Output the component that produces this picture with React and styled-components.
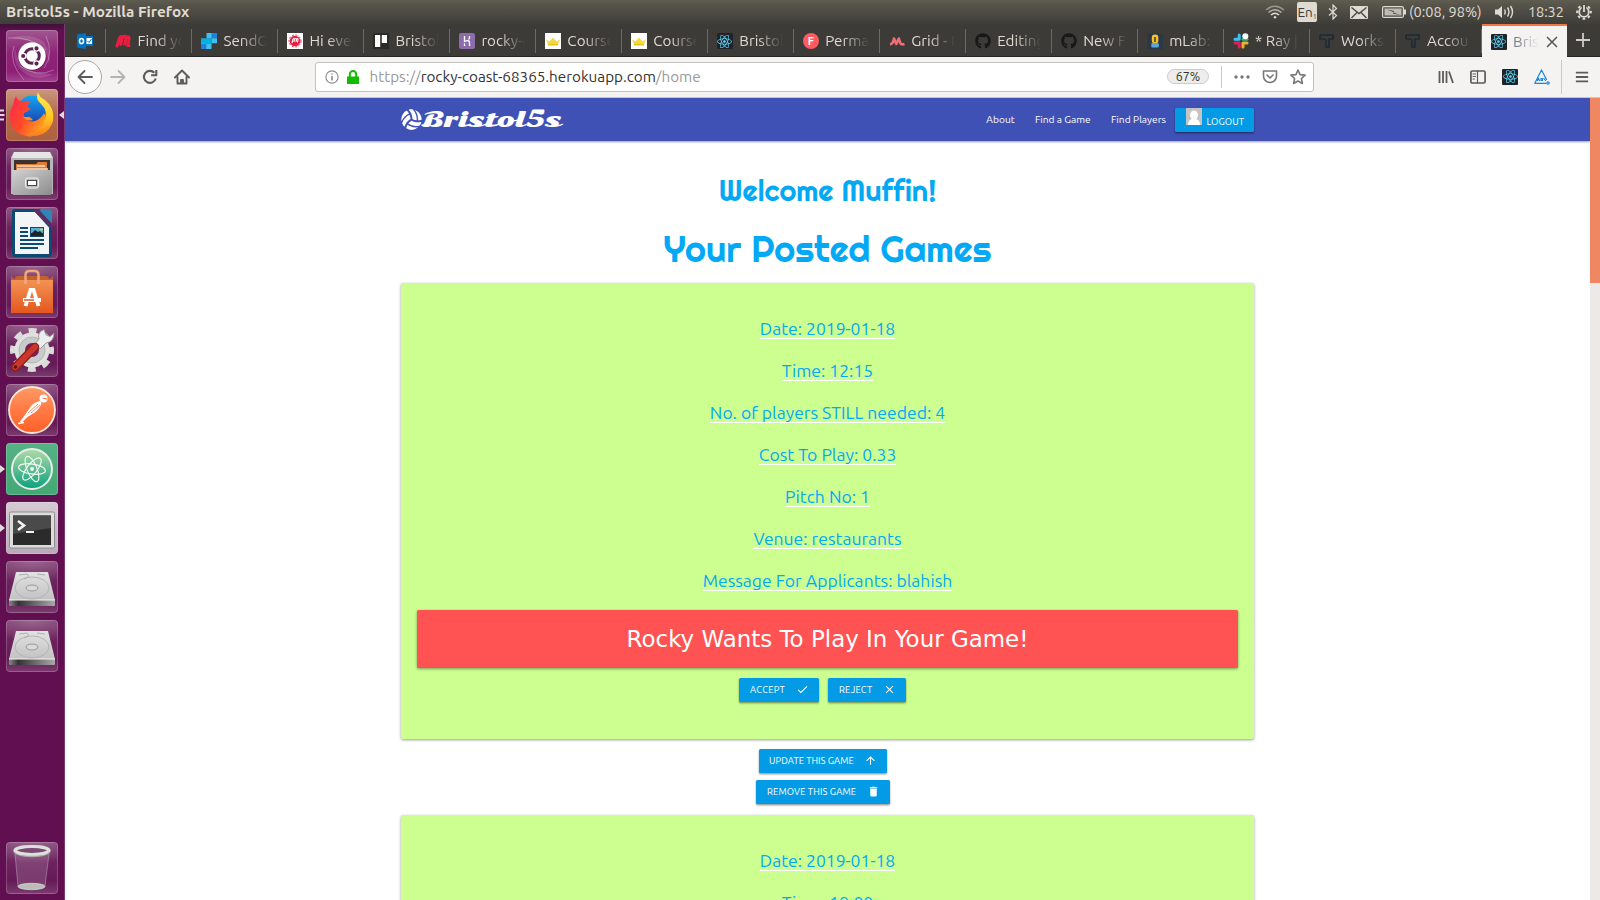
import React from "react";
import styled, { createGlobalStyle } from "styled-components";
import { FaGithub, FaReact, FaVolleyballBall } from "react-icons/fa";
import { MdCheck, MdClose, MdArrowUpward, MdDelete } from "react-icons/md";

const UI = `"Ubuntu", "Noto Sans", sans-serif`;

const GlobalStyle = createGlobalStyle`
  * { box-sizing: border-box; }
  body { margin: 0; overflow: hidden; background: #fff; font-family: ${UI}; }
  svg { display: block; flex: none; }
`;

const T = styled.span`
  letter-spacing: ${(p) => p.$ls || 0}px;
  white-space: pre;
`;

const Desktop = styled.div`
  width: 1600px;
  height: 900px;
  overflow: hidden;
  display: flex;
  flex-direction: column;
`;

/* ---------- system panel ---------- */
const Panel = styled.header`
  height: 24px;
  flex: none;
  display: flex;
  align-items: center;
  justify-content: space-between;
  padding: 0 8px 0 6px;
  background: linear-gradient(#5f5c50, #57544b 20%, #3e3d38);
  color: #e0dcd2;
  font-size: 14.5px;
`;
const PanelTitle = styled.div`
  font-size: 15.3px;
  font-weight: 700;
  line-height: 24px;
`;
const Indicators = styled.div`
  display: flex;
  align-items: center;
  line-height: 24px;
`;
const Ind = styled.div`
  display: flex;
  align-items: center;
  width: ${(p) => p.$w}px;
  height: 24px;
`;
const Lang = styled.div`
  width: 20px;
  height: 20px;
  border-radius: 2px;
  background: #dfdbd2;
  color: #3c3b37;
  font-size: 13.5px;
  line-height: 21px;
  display: flex;
  justify-content: center;
  align-items: baseline;
  small { font-size: 7px; line-height: 1; padding-top: 11px; align-self: flex-start; }
`;

const Below = styled.div`
  flex: 1;
  display: flex;
  min-height: 0;
`;

/* ---------- launcher ---------- */
const Launcher = styled.nav`
  width: 65px;
  flex: none;
  display: flex;
  flex-direction: column;
  gap: 7px;
  padding: 6px 0 6px 0;
  background: linear-gradient(#40103a, rgba(64, 16, 58, 0) 8px), #620f52;
  border-right: 1px solid #7d3a70;
`;
const Slot = styled.div`
  height: 52px;
  display: flex;
  align-items: center;
  margin-top: ${(p) => (p.$last ? "auto" : "0")};
`;
const Pip = styled.div`
  width: 6px;
  height: 14px;
  display: flex;
  align-items: center;
`;
const Tile = styled.div`
  width: 52px;
  height: 52px;
  border-radius: 4px;
  overflow: hidden;
  background: ${(p) => p.$bg || "radial-gradient(ellipse 50px 22px at 50% 0, rgba(255,255,255,0.22), rgba(255,255,255,0)), linear-gradient(#7d3d6f, #6b225d 40%, #651a57 75%, #7b3c6e)"};
  box-shadow: inset 0 0 0 1px rgba(255, 255, 255, 0.2);
`;

/* ---------- browser ---------- */
const Browser = styled.main`
  flex: 1;
  min-width: 0;
  display: flex;
  flex-direction: column;
`;
const Tabs = styled.div`
  height: 33px;
  flex: none;
  display: flex;
  background: #3c3b37;
  border-bottom: 1px solid #262522;
`;
const Tab = styled.div`
  width: ${(p) => (p.$pinned ? 41 : 85.98)}px;
  height: 32px;
  flex: none;
  display: flex;
  align-items: center;
  padding: 2px 0 0 ${(p) => (p.$pinned ? 12 : 9)}px;
  gap: 6.5px;
  font-size: 15.2px;
  color: #dfdbd2;
  background: linear-gradient(#6b6963, #6b6963) right 5px / 1px 24px no-repeat;
`;
const ActiveTab = styled(Tab)`
  width: 85px;
  height: 33px;
  background: #f4f3f1;
  border-top: 2px solid #f07746;
  padding-top: 0;
  color: #777b85;
`;
const TabLabel = styled.div`
  width: ${(p) => p.$w || 45}px;
  overflow: hidden;
  white-space: nowrap;
  line-height: 24px;
  mask-image: linear-gradient(90deg, #000 ${(p) => (p.$w ? 15 : 40)}%, transparent 98%);
`;
const Fav = styled.div`
  width: 16px;
  height: 16px;
  flex: none;
  display: flex;
  align-items: center;
  justify-content: center;
  border-radius: ${(p) => p.$r || 0}px;
  background: ${(p) => p.$bg || "transparent"};
  color: ${(p) => p.$c || "#fff"};
  font-size: ${(p) => p.$fs || 16}px;
  font-weight: 700;
  line-height: 1;
`;
const NewTab = styled.div`
  flex: 1;
  display: flex;
  align-items: center;
  justify-content: center;
`;

const Toolbar = styled.div`
  height: 41px;
  flex: none;
  display: flex;
  align-items: center;
  background: #f4f3f1;
  border-bottom: 1px solid #c9c7c2;
  padding: 0 0 1px 3px;
`;
const BackBtn = styled.div`
  width: 34px;
  height: 34px;
  flex: none;
  border-radius: 50%;
  border: 1px solid #a9a8a5;
  background: #fcfcfc;
  display: flex;
  align-items: center;
  justify-content: center;
`;
const ToolBtn = styled.div`
  width: ${(p) => p.$w || 32}px;
  height: 32px;
  flex: none;
  display: flex;
  align-items: center;
  justify-content: center;
`;
const UrlBar = styled.div`
  width: 999px;
  height: 30px;
  flex: none;
  margin-left: 117px;
  margin-right: 116px;
  display: flex;
  align-items: center;
  background: #fff;
  border: 1px solid #c3c2be;
  border-radius: 3px;
  padding-left: 9px;
  gap: 6px;
  font-size: 15.25px;
  color: #9a9a9a;
  b { font-weight: 400; color: #333; }
`;
const UrlText = styled.div`
  margin-left: 2.5px;
  flex: 1;
  line-height: 24px;
`;
const UrlTools = styled.div`
  display: flex;
  align-items: center;
`;
const Zoom = styled.div`
  width: 42px;
  height: 15px;
  border-radius: 8px;
  background: #ededec;
  border: 1px solid #cdcccb;
  color: #333;
  font-size: 12.4px;
  line-height: 13px;
  text-align: center;
  margin-right: 12px;
`;
const VLine = styled.div`
  width: 1px;
  flex: none;
  height: ${(p) => p.$h}px;
  margin: 0 ${(p) => p.$mr || 0}px 0 ${(p) => p.$ml || 0}px;
  background: #c9c8c5;
`;

/* ---------- page ---------- */
const Viewport = styled.div`
  flex: 1;
  display: flex;
  min-height: 0;
`;
const Page = styled.div`
  width: 1525px;
  overflow: hidden;
`;
const Scroll = styled.div`
  width: 10px;
  background: #eceae8;
`;
const Thumb = styled.div`
  height: 185px;
  background: #f08763;
`;
const SiteNav = styled.div`
  height: 43px;
  background: #3f51b5;
  box-shadow: 0 1px 2px rgba(0, 0, 0, 0.4);
  padding: 0 336px 0 336px;
  display: flex;
  align-items: center;
  color: #fff;
`;
const Brand = styled.div`
  display: flex;
  align-items: center;
  flex: 1;
`;
const BrandName = styled.div`
  font: 400 21.4px/24px "Sonsie One", "DejaVu Serif", serif;
`;
const NavLink = styled.div`
  font-size: 10.15px;
  padding-right: ${(p) => p.$pr}px;
`;
const Btn = styled.div`
  height: 24px;
  display: flex;
  align-items: center;
  background: #039be5;
  color: #fff;
  border-radius: 1.5px;
  box-shadow: 0 1px 2px rgba(0, 0, 0, 0.35), 0 2px 2px rgba(0, 0, 0, 0.12);
  font-size: 9.4px;
  width: ${(p) => p.$w}px;
  padding: 0 ${(p) => p.$pr || 10}px 2px ${(p) => p.$pl || 11}px;
  justify-content: space-between;
`;
const Logout = styled(Btn)`
  align-items: flex-start;
  line-height: 27px;
`;
const Body = styled.div`
  display: flex;
  flex-direction: column;
  align-items: center;
`;
const Welcome = styled.h3`
  margin: 29px 0 0;
  font: 400 29px/40px "Righteous", "Lato", sans-serif;
  color: #03a9f4;
`;
const Heading = styled.h2`
  margin: 14px 0 0;
  font: 400 36px/50px "Righteous", "Lato", sans-serif;
  color: #03a9f4;
`;
const Card = styled.section`
  width: 853px;
  height: 456px;
  margin-top: ${(p) => p.$mt}px;
  background: #ccff90;
  border-radius: 2px;
  box-shadow: 0 1px 3px rgba(0, 0, 0, 0.4);
  padding: 25px 16px 0;
  display: flex;
  flex-direction: column;
  align-items: center;
  flex: none;
`;
const Row = styled.div`
  height: 42px;
  display: flex;
  align-items: center;
  color: #03a9f4;
  font-size: 17.55px;
`;
const Under = styled.span`
  line-height: 20px;
  height: 20px;
  border-bottom: 1px solid #fff;
`;
const Alert = styled.div`
  width: 821px;
  height: 58px;
  margin-top: 8px;
  background: #ff5252;
  border-radius: 1.5px;
  box-shadow: 0 1px 3px rgba(0, 0, 0, 0.4);
  color: #fff;
  font: 22.95px/58px "DejaVu Sans", sans-serif;
  text-align: center;
`;
const Pair = styled.div`
  display: flex;
  gap: 9px;
  margin: 10px 10px 0 0;
`;
const Actions = styled.div`
  display: flex;
  flex-direction: column;
  align-items: center;
  gap: 7px;
  margin: 10px 9px 0 0;
`;

/* ---------- drawings ---------- */
const ReactFav = () => (
  <Fav $bg="#20232a" $r={1} $c="#61dafb" $fs={15}><FaReact /></Fav>
);
const Crown = () => (
  <Fav $bg="#fff">
    <svg width="16" height="16" viewBox="0 0 16 16"><path d="M1 6.500l3.500 2L8 4.500l3.500 4 3.500-2-2 5H3z" fill="#f5d83d" /><path d="M3 11h10v1.500H3z" fill="#e3c21f" /></svg>
  </Fav>
);
const Tee = () => (
  <Fav>
    <svg width="16" height="16" viewBox="0 0 16 16" fill="none" stroke="#1c2b36" strokeWidth="1.600">
      <path d="M1 2h13v4H10v8H7V6M1 2v4h5" />
    </svg>
  </Fav>
);

const tabs = [
  ["Find yo", <Fav><svg width="16" height="14" viewBox="0 0 16 14" fill="none" stroke="#ed1c40" strokeWidth="3" strokeLinecap="round" strokeLinejoin="round"><path d="M2 12L4.500 4Q6 1.500 7.500 3L5.800 10.500M7.500 4Q9.500 1 11.300 3L9.700 10M11.300 4Q13.800 1.500 14.200 4L12.700 11.500h1.300" /></svg></Fav>],
  ["SendG", <Fav><svg width="16" height="16" viewBox="0 0 16 16"><path fill="#9dd6f5" d="M0 5.300h5.300V16H0z" /><path fill="#00b3e3" d="M0 5.300h5.300v5.300H0zM5.300 5.300h5.400v5.300H5.300z" /><path fill="#1a82e2" d="M10.700 0H16v5.300h-5.300zM0 10.600h5.300V16H0z" /><path fill="#3fc0ef" d="M10.700 5.300H16v5.300h-5.300zM5.300 0h5.400v5.300H5.300zM5.300 10.600h5.400V16H5.300z" /><path fill="#3c3b37" d="M0 0h5.300v5.300H0zM10.700 10.600H16V16h-5.300z" /></svg></Fav>],
  ["Hi ever", <Fav $bg="#fff"><svg width="14" height="14" viewBox="0 0 14 14"><circle cx="7" cy="7" r="5.300" fill="#ed1c40" /><circle cx="7" cy="7" r="6" fill="none" stroke="#ed1c40" strokeWidth=".9" strokeDasharray="2 1.500" /><path d="M4 9l1-4q1-1 1.500 0L6 8m.500-3Q8 4 8.500 5L8 8m.500-3Q10 4 10 5l-.5 3.500" fill="none" stroke="#fff" strokeWidth="1.100" /></svg></Fav>],
  ["Bristol", <Fav><svg width="16" height="16" viewBox="0 0 16 16"><rect width="16" height="16" rx="1" fill="#2a2a28" /><rect x="2" y="2" width="5.200" height="12" fill="#fff" /><rect x="8.800" y="2" width="5.200" height="8" fill="#fff" /></svg></Fav>],
  ["rocky-c", <Fav $bg="#8d6cab" $r={2}><svg width="16" height="16" viewBox="0 0 16 16" fill="none" stroke="#fff" strokeWidth="1.300"><path d="M5.500 3v5.500Q10.500 6.500 10.500 9.500V13M5.500 10.500v2.500M10.500 3v2l-1 1.500" /></svg></Fav>],
  ["Course", <Crown />],
  ["Course", <Crown />],
  ["Bristol", <ReactFav />],
  ["Perma", <Fav $bg="#ff5a5f" $r={8} $fs={11}>F</Fav>],
  ["Grid - N", <Fav><svg width="16" height="16" viewBox="0 0 16 16" fill="none" stroke="#ee6e73" strokeWidth="2.600" strokeLinejoin="round"><path d="M1 11.500Q4 11 5 5.500l2.300 5.500L9.800 5.500l1.700 5q1 1.500 4 .5" /></svg></Fav>],
  ["Editing", <Fav $c="#191717"><FaGithub /></Fav>],
  ["New Fi", <Fav $c="#191717"><FaGithub /></Fav>],
  ["mLab:", <Fav $bg="#2b3947"><svg width="16" height="16" viewBox="0 0 16 16"><rect x="4.800" y="1.500" width="6.500" height="9" rx="3" fill="#f7c325" /><rect x="4.300" y="10" width="7.500" height="4.500" rx="1" fill="#5aa7dc" /><path d="M8 4v5" stroke="#2b3947" strokeWidth="1.500" /></svg></Fav>],
  ["* Ray |", <Fav><svg width="16" height="16" viewBox="0 0 16 16" strokeWidth="3" strokeLinecap="round"><path d="M6.200 2v4M2 6.200h4" stroke="#36c5f0" /><path d="M10 6.200h4" stroke="#2eb67d" /><path d="M10 10v4M10 10h4" stroke="#ecb22e" /><path d="M2 10h4M6.200 10v4" stroke="#e01e5a" /><circle cx="12.300" cy="3.300" r="3" fill="#fff" /></svg></Fav>],
  ["Works", <Tee />],
  ["Accou", <Tee />],
];

const facts = (time) => [
  "Date: 2019-01-18",
  `Time: ${time}`,
  "No. of players STILL needed: 4",
  "Cost To Play: 0.33",
  "Pitch No: 1",
  "Venue: restaurants",
  "Message For Applicants: blahish",
];

const Drive = () => (
  <svg width="52" height="52" viewBox="0 0 52 52">
    <defs>
      <linearGradient id="dr" x1="0" y1="0" x2="0" y2="1"><stop offset="0" stopColor="#e2e2e2" /><stop offset="1" stopColor="#c2c2c2" /></linearGradient>
      <linearGradient id="drf"><stop offset="0" stopColor="#888" /><stop offset=".2" stopColor="#333" /><stop offset="1" stopColor="#aaa" /></linearGradient>
    </defs>
    <path d="M10 11h32l7 28H3z" fill="url(#dr)" />
    <path d="M3 39h46v5q0 1-1 1H4q-1 0-1-1z" fill="url(#drf)" />
    <path d="M3 39h46" stroke="#f4f4f4" />
    <ellipse cx="26" cy="27" rx="17" ry="11" fill="none" stroke="#b4b4b4" />
    <ellipse cx="26" cy="27" rx="6" ry="3" fill="#d9d9d9" stroke="#999" />
    <path d="M13 14l8-1q4 3-3 5M31 13l8 1" fill="none" stroke="#b0b0b0" />
  </svg>
);

const tiles = [
  { bg: "linear-gradient(#a0578f, #8e2377 45%, #8e1f77 80%, #a2458e)", art: (
    <svg width="52" height="52" viewBox="0 0 52 52" fill="none">
      <path d="M5 8Q24 2 38 12 46 22 43 34 40 14 24 11 14 9 5 8zM47 44Q32 52 18 43 6 34 9 18 12 36 26 41 38 44 47 44z" fill="#fff" opacity=".13" />
      <g stroke="#fff" strokeOpacity=".3">
        <path d="M2 8Q24 6 40 20M40 6Q48 24 38 38M48 40Q30 48 14 36M18 50Q2 32 8 16" />
      </g>
      <circle cx="26" cy="26.500" r="14" fill="#000" opacity=".25" />
      <circle cx="26" cy="26" r="13.700" fill="#fff" />
      <circle cx="26" cy="26" r="7.300" stroke="#5e2750" strokeWidth="3" />
      <g fill="#5e2750" stroke="#fff" strokeWidth="1.200"><circle cx="17.200" cy="26" r="2.700" /><circle cx="30.500" cy="18.400" r="2.700" /><circle cx="30.500" cy="33.600" r="2.700" /></g>
    </svg>) },
  { bg: "linear-gradient(#c99880, #b3694a 50%, #b0623f)", pip: "bars", art: (
    <svg width="52" height="52" viewBox="0 0 52 52">
      <defs>
        <linearGradient id="ff" x1="0" y1="0.200" x2="1" y2="0.800"><stop offset="0" stopColor="#ff2a4d" /><stop offset=".45" stopColor="#ff4a2a" /><stop offset="1" stopColor="#ffb01e" /></linearGradient>
        <linearGradient id="fy" x1="0" y1="0" x2="0" y2="1"><stop offset="0" stopColor="#fff04a" /><stop offset=".6" stopColor="#ffc524" /><stop offset="1" stopColor="#ff7a1a" /></linearGradient>
        <linearGradient id="fb" x1="0" y1="0" x2="0" y2="1"><stop offset="0" stopColor="#12a5f5" /><stop offset="1" stopColor="#1b3fae" /></linearGradient>
      </defs>
      <circle cx="26" cy="21" r="14.500" fill="url(#fb)" />
      <path d="M10 7q2 6 7 5 5-1 8 1-4 2-3 5l3 2q-3 1-4 3-4 0-3 4 3 7 11 5 6-2 9-8 5 8-2 17-6 7-13 6.500Q10 46 5 35 2 25 7 16q1-6 3-9z" fill="url(#ff)" />
      <path d="M32 3q-3 7 3 12 8 7 3 18-4 10-14 14 12 1 19-7 7-9 3-20-3-6-7-9-6-3-7-8z" fill="url(#fy)" />
      <path d="M17 28q4 5 10 3-3-4-6-3z" fill="#ff8a2a" />
    </svg>) },
  { art: (
    <svg width="52" height="52" viewBox="0 0 52 52">
      <defs><linearGradient id="fi" x1="0" y1="0" x2="1" y2="1"><stop offset="0" stopColor="#d2d2d2" /><stop offset="1" stopColor="#8c8c8c" /></linearGradient></defs>
      <path d="M8 4h36l3 5v37H5V9z" fill="#b7b7b7" /><path d="M8 4h36l2 6H6z" fill="#e6e6e6" />
      <rect x="8" y="12" width="36" height="12" fill="#3a3230" />
      <path d="M10 24v-8h20l2-2h9v10z" fill="#e07a37" /><path d="M11 18h28M11 21h31" stroke="#f8dcc0" strokeWidth="1.300" />
      <path d="M6 22h40v22q0 3-2 3H8q-2 0-2-3z" fill="url(#fi)" />
      <rect x="19.500" y="30" width="13" height="10" rx="2" fill="#bcbcbc" stroke="#eee" /><rect x="21.500" y="32.500" width="9" height="5" fill="#fff" stroke="#444" />
    </svg>) },
  { art: (
    <svg width="52" height="52" viewBox="0 0 52 52">
      <path d="M8 2h26l12 13v31q0 4-4 4H10q-4 0-4-4V4q0-2 2-2z" fill="#0b4a72" />
      <path d="M9 5h20l14 15.500V47H9z" fill="#f2f4f6" />
      <path d="M33 3h10q3 0 3 3v11z" fill="#2f86b5" /><path d="M27 3l19 19V17L33 3z" fill="#5c2d63" />
      <g stroke="#0b4a72" strokeWidth="2"><path d="M14 21h8M14 25h8M14 29h8M14 33h24M14 37h24M14 41h18" /></g>
      <rect x="24" y="20" width="14" height="10" fill="#0b4a72" /><rect x="25" y="21" width="12" height="5" fill="#57b0d9" /><path d="M25 29v-2l4-4 3 2 2-1 3 3v2z" fill="#222" /><circle cx="35.500" cy="22.500" r="1.300" fill="#f3c623" />
    </svg>) },
  { art: (
    <svg width="52" height="52" viewBox="0 0 52 52">
      <defs><linearGradient id="sw" x1="0" y1="0" x2="0" y2="1"><stop offset="0" stopColor="#f29355" /><stop offset="1" stopColor="#e4571d" /></linearGradient></defs>
      <path d="M5 10l3 3 3-3h30l3 3 3-3v6H5z" fill="#c4602d" />
      <path d="M5 14h42v33H5z" fill="url(#sw)" />
      <path d="M19.500 18V9q0-4 4-4h5q4 0 4 4v9" fill="none" stroke="#f0a77c" strokeWidth="2.500" />
      <path d="M19.500 40l5-16h3l5 16" fill="none" stroke="#fff" strokeWidth="3.800" /><path d="M17 34h18" stroke="#fff" strokeWidth="4" /><path d="M18 34h10" stroke="#d5622c" strokeWidth="1.300" />
    </svg>) },
  { art: (
    <svg width="52" height="52" viewBox="0 0 52 52">
      <circle cx="26" cy="25" r="19.500" fill="none" stroke="#d9dcd9" strokeWidth="5" strokeDasharray="8 7.315" strokeDashoffset="4" />
      <circle cx="26" cy="25" r="17.500" fill="#dfe0df" /><circle cx="26" cy="25" r="13" fill="#c9cbca" stroke="#b5b7b6" />
      <circle cx="26" cy="25" r="7" fill="#741f5f" />
      <path d="M33 14q-2-7 5-9.500l2 5.500 4 1.500 4-3.500q0 9-8 10l-6 6-5-5z" fill="#eceeed" stroke="#8b8b8b" strokeWidth=".8" />
      <path d="M9.500 42L29 22" stroke="#8f1d18" strokeWidth="8.500" strokeLinecap="round" /><path d="M9.500 42L29 22" stroke="#c9362e" strokeWidth="6" strokeLinecap="round" />
      <circle cx="9.500" cy="42" r="1.700" fill="#65100d" />
    </svg>) },
  { art: (
    <svg width="52" height="52" viewBox="0 0 52 52">
      <defs><linearGradient id="pm" x1="0" y1="0" x2="0" y2="1"><stop offset="0" stopColor="#ff9a63" /><stop offset=".5" stopColor="#ff7a45" /><stop offset="1" stopColor="#ff5f28" /></linearGradient></defs>
      <circle cx="26" cy="26" r="23" fill="url(#pm)" stroke="#f8e6dc" strokeWidth="1.800" />
      <circle cx="37.500" cy="14.500" r="4" fill="#fff" /><path d="M36.500 14l4.500 1" stroke="#ff6c37" />
      <path d="M34 17q-8 2-11 8l-4 6-5 6.500 1.500 1.500 6-6 8-5q4-3 6-9z" fill="#fff" />
      <path d="M32 20l-10 9M34 21l-9 8" stroke="#ff6c37" strokeWidth=".8" /><path d="M12 39.500l6-1" stroke="#fff" strokeWidth="1.500" />
    </svg>) },
  { bg: "linear-gradient(#55b284, #42a874)", pip: "arrow", art: (
    <svg width="52" height="52" viewBox="0 0 52 52" fill="none">
      <defs><linearGradient id="at" x1="0" y1="0" x2="0" y2="1"><stop offset="0" stopColor="#b0dba8" /><stop offset="1" stopColor="#0aa07c" /></linearGradient></defs>
      <circle cx="26" cy="26" r="20" fill="url(#at)" stroke="#e9ece9" strokeWidth="2" />
      <g stroke="#f3f8f3" strokeWidth="1.200"><ellipse cx="26" cy="26" rx="13.500" ry="5" transform="rotate(8 26 26)" /><ellipse cx="26" cy="26" rx="13.500" ry="5" transform="rotate(68 26 26)" /><ellipse cx="26" cy="26" rx="13.500" ry="5" transform="rotate(128 26 26)" /></g>
      <circle cx="26" cy="26" r="2" fill="#f3f8f3" />
    </svg>) },
  { bg: "linear-gradient(#d5cad3, #b9aab7)", pip: "arrow", art: (
    <svg width="52" height="52" viewBox="0 0 52 52">
      <rect x="3.500" y="10" width="45" height="36" rx="1.500" fill="#dcdcdc" stroke="#8d8d8d" /><rect x="7" y="13.500" width="38" height="29.500" fill="#2b2b2b" />
      <path d="M7 13.500h38V26L7 32z" fill="#4a4a4a" />
      <path d="M12 19l6 4.500-6 4.500" fill="none" stroke="#f3f3f3" strokeWidth="2.600" /><path d="M20 30h8" stroke="#f3f3f3" strokeWidth="2.200" />
    </svg>) },
  { art: <Drive /> },
  { art: <Drive /> },
  { last: true, art: (
    <svg width="52" height="52" viewBox="0 0 52 52">
      <path d="M9 9h34l-4 36H12z" fill="#fff" opacity=".14" />
      <path d="M9 12l3 32M43 12l-4 32" stroke="#fff" strokeOpacity=".3" />
      <ellipse cx="25.500" cy="44.500" rx="13.500" ry="3.200" fill="#b9bdb8" stroke="#dfe2de" strokeWidth=".7" />
      <ellipse cx="26" cy="8.500" rx="17" ry="4" fill="#7a4a72" stroke="#dfe0dd" strokeWidth="3.200" />
      <path d="M8 10q3 4.500 18 4.500T44 10" fill="none" stroke="#a9aca7" strokeWidth="1.300" />
    </svg>) },
];

const Ico = ({ s = 16, children, ...r }) => (
  <svg width={s} height={s} viewBox="0 0 16 16" fill="none" stroke="#5b5b5a" strokeWidth="1.800" strokeLinecap="round" strokeLinejoin="round" {...r}>{children}</svg>
);

const Facts = ({ time }) => facts(time).map((text) => (
  <Row key={text}><Under><T>{text}</T></Under></Row>
));

export default function App() {
  return (
    <Desktop>
      <GlobalStyle />
      <Panel>
        <PanelTitle><T>Bristol5s - Mozilla Firefox</T></PanelTitle>
        <Indicators>
          <Ind $w={32}>
            <svg width="20" height="16" viewBox="0 0 20 16" fill="none" stroke="#dfdbd2" strokeWidth="1.500"><path d="M1 6Q10-1.500 19 6" opacity=".5" /><path d="M3.500 8.500Q10 3 16.500 8.500" opacity=".7" /><path d="M6 11Q10 7.500 14 11" /><circle cx="10" cy="13.300" r="1.200" fill="#dfdbd2" stroke="none" /></svg>
          </Ind>
          <Ind $w={31}><Lang>En<small>1</small></Lang></Ind>
          <Ind $w={22}>
            <svg width="10" height="16" viewBox="0 0 10 16" fill="none" stroke="#dfdbd2" strokeWidth="1.200"><path d="M1 4.500l7.500 7L5 15V1l3.500 3.500-7.500 7" /></svg>
          </Ind>
          <Ind $w={32}>
            <svg width="18" height="13" viewBox="0 0 18 13"><rect width="18" height="13" rx="1" fill="#dfdbd2" /><path d="M1.500 1.500L9 7.500l7.500-6M1.500 12L7 6.500M16.500 12L11 6.500" fill="none" stroke="#4b4942" strokeWidth="1.400" /></svg>
          </Ind>
          <Ind $w={27}>
            <svg width="24" height="12" viewBox="0 0 24 12"><rect x=".6" y=".6" width="20.800" height="10.800" rx="1.500" fill="none" stroke="#dfdbd2" strokeWidth="1.200" /><rect x="2.500" y="2.500" width="17" height="7" fill="#bdbab1" /><rect x="22" y="3.500" width="2" height="5" fill="#dfdbd2" /><path d="M5 3.500l7 1.500-.5 1.500L18 9l-7-1.500.5-1.500z" fill="#3e3d38" /></svg>
          </Ind>
          <Ind $w={86}><T>(0:08, 98%)</T></Ind>
          <Ind $w={33}>
            <svg width="20" height="16" viewBox="0 0 20 16" fill="none" stroke="#dfdbd2" strokeWidth="1.400"><path d="M0 5.500h3L7 2v12L3 10.500H0z" fill="#dfdbd2" stroke="none" /><path d="M9.500 5.500q1.500 2.500 0 5M12.500 3.500q3 4.500 0 9M15.500 2q4 6 0 12" /></svg>
          </Ind>
          <Ind $w={48}><T $ls={-0.1}>18:32</T></Ind>
          <svg width="16" height="16" viewBox="0 0 16 16" fill="none" stroke="#dfdbd2"><circle cx="8" cy="8" r="4.800" strokeWidth="1.800" /><circle cx="8" cy="8" r="6.800" strokeWidth="2" strokeDasharray="2.670 2.670" strokeDashoffset="1.330" /><path d="M8 0v7" stroke="#4b4942" strokeWidth="4.500" /><path d="M8 1v7" strokeWidth="1.800" /></svg>
        </Indicators>
      </Panel>
      <Below>
        <Launcher>
          {tiles.map((t, i) => (
            <Slot key={i} $last={t.last}>
              <Pip>
                {t.pip === "arrow" && <svg width="5" height="10" viewBox="0 0 5 10"><path d="M0 1l5 4-5 4z" fill="#ddd" /></svg>}
                {t.pip === "bars" && <svg width="5" height="12" viewBox="0 0 5 12"><path d="M0 1.500h4M0 6h4.500M0 10.500h4" stroke="#ddd" strokeWidth="2" /></svg>}
              </Pip>
              <Tile $bg={t.bg}>{t.art}</Tile>
              {t.pip === "bars" && <svg width="6" height="8" viewBox="0 0 6 8"><path d="M6 0L1 4l5 4z" fill="#ddd" /></svg>}
            </Slot>
          ))}
        </Launcher>
        <Browser>
          <Tabs>
            <Tab $pinned>
              <Fav>
                <svg width="16" height="16" viewBox="0 0 16 16"><path d="M0 1.500L9 0v16l-9-1.500z" fill="#0072c6" /><rect x="9" y="3" width="7" height="10" fill="#0072c6" /><rect x="9.500" y="5" width="5.500" height="6" fill="#fff" /><path d="M10.500 8l1.500 1.500L14.500 6" stroke="#0072c6" fill="none" /><ellipse cx="4.500" cy="8" rx="2" ry="2.600" fill="none" stroke="#fff" strokeWidth="1.500" /></svg>
              </Fav>
            </Tab>
            {tabs.map(([label, icon], i) => (
              <Tab key={i}>{icon}<TabLabel>{label}</TabLabel></Tab>
            ))}
            <ActiveTab>
              <ReactFav />
              <TabLabel $w={26}>Bris</TabLabel>
              <Ico s={12} strokeWidth="2.200"><path d="M2 2l12 12M14 2L2 14" /></Ico>
            </ActiveTab>
            <NewTab><svg width="14" height="14" viewBox="0 0 14 14" stroke="#cfccc6" strokeWidth="1.800"><path d="M7 0v14M0 7h14" /></svg></NewTab>
          </Tabs>
          <Toolbar>
            <BackBtn><Ico><path d="M15 8H1.500M7.500 2l-6 6 6 6" /></Ico></BackBtn>
            <ToolBtn><Ico stroke="#b5b4b2"><path d="M1 8h13.500M8.500 2l6 6-6 6" /></Ico></ToolBtn>
            <ToolBtn><Ico strokeWidth="2.100" strokeLinecap="butt"><path d="M13.700 9.500a6 6 0 1 1-1.400-5.700M14.300 1v5.200h-5.200" /></Ico></ToolBtn>
            <ToolBtn><Ico strokeWidth="1.900"><path d="M1 8.500L8 1.500l7 7M3.500 8v6.500h9V8M7 14.500V11h2v3.500" /></Ico></ToolBtn>
            <UrlBar>
              <Ico s={14} stroke="#8b8b8b" strokeWidth="1.300"><circle cx="8" cy="8" r="7" /><path d="M8 7.500v4M8 4.500v.2" strokeWidth="1.800" /></Ico>
              <Ico stroke="none"><path d="M2 7.500h12v7.500H2z" fill="#12bc00" /><path d="M4.800 8V5.200a3.200 3.200 0 0 1 6.400 0V8" fill="none" stroke="#12bc00" strokeWidth="2" /></Ico>
              <UrlText><T>https://<b>rocky-coast-68365.herokuapp.com</b>/home</T></UrlText>
              <UrlTools>
                <Zoom>67%</Zoom>
                <VLine $h={22} $mr={4} />
                <ToolBtn $w={31}><svg width="16" height="4" viewBox="0 0 16 4" fill="#777"><circle cx="2" cy="2" r="1.700" /><circle cx="8" cy="2" r="1.700" /><circle cx="14" cy="2" r="1.700" /></svg></ToolBtn>
                <ToolBtn $w={26}><Ico stroke="#777" strokeWidth="1.600"><path d="M1.500 2h13v5a6.500 6.500 0 0 1-13 0zM5 6l3 3 3-3" /></Ico></ToolBtn>
                <ToolBtn $w={30}><Ico stroke="#777" strokeWidth="1.600"><path d="M8 1l2.100 4.600 5 .5-3.700 3.400 1 5L8 12l-4.400 2.500 1-5L.9 6.100l5-.5z" /></Ico></ToolBtn>
              </UrlTools>
            </UrlBar>
            <ToolBtn><Ico strokeLinecap="butt"><path d="M1.500 2v12M5 2v12M8.500 2v12M11 2.500l4 11.500" /></Ico></ToolBtn>
            <ToolBtn><Ico strokeWidth="1.700"><rect x=".9" y="2" width="14.200" height="12" rx="1.500" /><path d="M7.500 2v12M3 5h2.500M3 7.500h2.500M3 10h1.500" strokeWidth="1.200" /></Ico></ToolBtn>
            <ToolBtn><ReactFav /></ToolBtn>
            <ToolBtn><Ico stroke="#1c87d6" strokeWidth="1.200"><path d="M7.500 1L.8 14.300H12M7.500 1l5 9.500M4.500 9.500l-1 2M4.500 9.500l1 2M7 9.500h1.500v2H7zM10 9.500l1.500 2" /><circle cx="14" cy="14" r="1.200" /></Ico></ToolBtn>
            <VLine $h={34} $ml={3} />
            <ToolBtn $w={39}><Ico s={14} strokeLinecap="butt" strokeWidth="2.200"><path d="M1 3h14M1 8h14M1 13h14" /></Ico></ToolBtn>
          </Toolbar>
          <Viewport>
            <Page>
              <SiteNav>
                <Brand>
                  <FaVolleyballBall size={21} />
                  <BrandName><T>Bristol5s</T></BrandName>
                </Brand>
                <NavLink $pr={20}><T $ls={0.08}>About</T></NavLink>
                <NavLink $pr={20.500}><T>Find a Game</T></NavLink>
                <NavLink $pr={9}><T $ls={0.05}>Find Players</T></NavLink>
                <Logout $w={79}>
                  <svg width="16" height="17" viewBox="0 0 16 17"><rect width="16" height="17" fill="#c4c4c4" /><ellipse cx="8" cy="7" rx="4" ry="4.500" fill="#fff" /><path d="M2 17q0-5 4-6h4q4 1 4 6z" fill="#fff" /></svg>
                  <T $ls={0.1}>LOGOUT</T>
                </Logout>
              </SiteNav>
              <Body>
                <Welcome><T>Welcome Muffin!</T></Welcome>
                <Heading><T>Your Posted Games</T></Heading>
                <Card $mt={9}>
                  <Facts time="12:15" />
                  <Alert><T>Rocky Wants To Play In Your Game!</T></Alert>
                  <Pair>
                    <Btn $w={80}><T $ls={0.25}>ACCEPT</T><MdCheck size={13} /></Btn>
                    <Btn $w={78}><T $ls={0.2}>REJECT</T><MdClose size={13} /></Btn>
                  </Pair>
                </Card>
                <Actions>
                  <Btn $w={128} $pl={10}><T $ls={0.07}>UPDATE THIS GAME</T><MdArrowUpward size={13} /></Btn>
                  <Btn $w={134}><T $ls={0.15}>REMOVE THIS GAME</T><MdDelete size={13} /></Btn>
                </Actions>
                <Card $mt={11}>
                  <Facts time="19:00" />
                </Card>
              </Body>
            </Page>
            <Scroll><Thumb /></Scroll>
          </Viewport>
        </Browser>
      </Below>
    </Desktop>
  );
}
